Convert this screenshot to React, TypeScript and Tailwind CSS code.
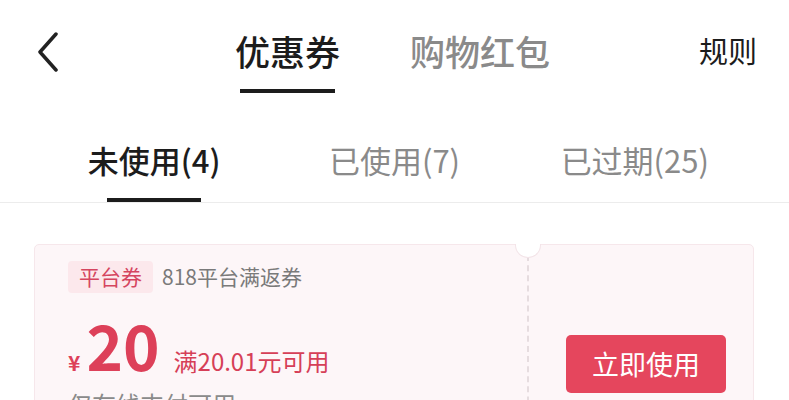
import React from 'react';

const font = { fontFamily: '"Noto Sans CJK SC", "Noto Sans", sans-serif' };

export default function App() {
  return (
    <div className="w-[789px] h-[400px] overflow-hidden bg-white" style={font}>
      {/* Top nav */}
      <div className="flex items-start h-[103px] pl-[37px] pr-[32px]">
        <svg width="22" height="40" viewBox="0 0 22 40" className="mt-[32px]" fill="none">
          <polyline points="19,2 3,20 19,38" stroke="#222" strokeWidth="3.5" strokeLinecap="round" strokeLinejoin="round" />
        </svg>
        <div className="ml-[176px] mt-[33px] flex flex-col items-center">
          <span className="text-[35px] leading-[35px] font-medium text-[#1c1c1c]">优惠券</span>
          <div className="mt-[21px] h-[4px] w-[95px] bg-[#1c1c1c]" />
        </div>
        <span className="ml-[70px] mt-[33px] text-[35px] leading-[35px] font-medium text-[#8a8a8a]">购物红包</span>
        <span className="ml-auto mt-[36px] text-[29px] leading-[29px] text-[#1c1c1c]">规则</span>
      </div>

      {/* Status tabs */}
      <div className="grid grid-cols-3 px-[34px] h-[100px] border-b border-[#ececec]">
        <div className="flex flex-col items-center pt-[40px]">
          <span className="text-[31px] leading-[34px] font-medium text-[#1c1c1c]">未使用(4)</span>
          <div className="mt-[21px] h-[4px] w-[94px] bg-[#1c1c1c]" />
        </div>
        <div className="flex flex-col items-center pt-[40px]">
          <span className="text-[31px] leading-[34px] text-[#8a8a8a]">已使用(7)</span>
        </div>
        <div className="flex flex-col items-center pt-[40px]">
          <span className="text-[31px] leading-[34px] text-[#8a8a8a]">已过期(25)</span>
        </div>
      </div>

      {/* Coupon card */}
      <div className="mt-[41px] ml-[34px] mr-[35px] h-[220px] flex rounded-[5px] border border-[#f6e7eb] bg-[#fdf6f8]">
        <div className="flex-1 pl-[33px] pt-[16px]">
          <div className="flex items-center">
            <span className="h-[32px] px-[11px] flex items-center rounded-[4px] bg-[#fce8ec] text-[21px] text-[#d5455f]">平台券</span>
            <span className="ml-[9px] text-[21px] text-[#7a7a7a]">818平台满返券</span>
          </div>
          <div className="mt-[20px] flex items-baseline">
            <span className="text-[21px] font-bold text-[#dd4059]">¥</span>
            <span className="ml-[6px] text-[62px] leading-[62px] font-bold text-[#dd4059]">20</span>
            <span className="ml-[14px] text-[24px] text-[#d63f57]">满20.01元可用</span>
          </div>
          <div className="mt-[10px] text-[24px] leading-[30px] text-[#8a8a8a]">仅在线支付可用</div>
        </div>
        <div className="relative w-[226px] border-l-2 border-dashed border-[#e6dcdf] flex justify-end pr-[27px] pt-[90px]">
          <div className="absolute -top-[1px] -left-[14px] w-[26px] h-[14px] rounded-b-full bg-white border border-t-0 border-[#f3e4e8]" />
          <button className="w-[160px] h-[58px] rounded-[5px] bg-[#e5465d] text-white text-[27px]">立即使用</button>
        </div>
      </div>
    </div>
  );
}
